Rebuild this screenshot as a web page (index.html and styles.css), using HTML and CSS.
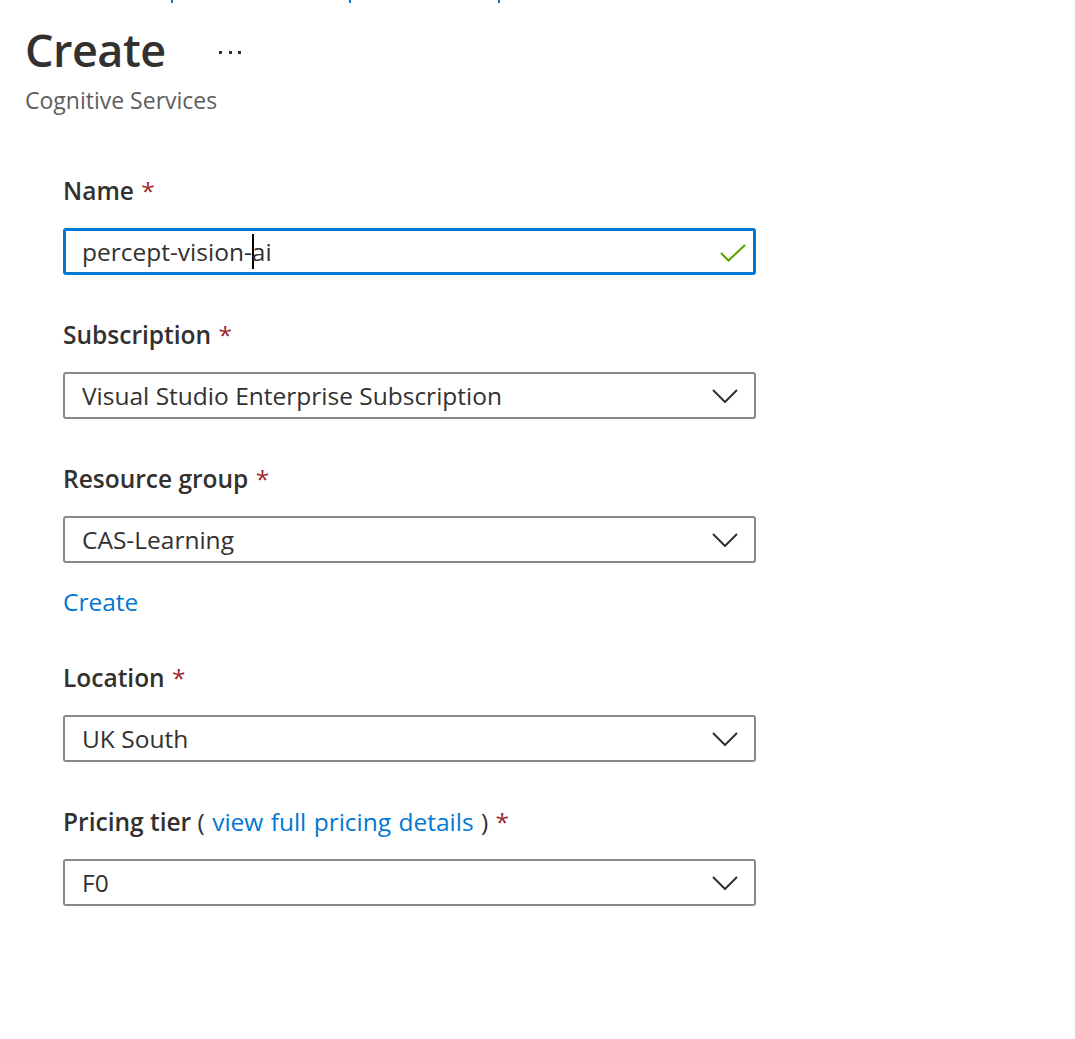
FILE: index.html
```html
<html lang="en">
  <head>
    <meta charset="UTF-8" />
    <meta name="viewport" content="width=device-width, initial-scale=1.0" />
    <title>Create - Cognitive Services</title>
    <link rel="stylesheet" href="styles.css">
  </head>
  <body>
    <div class="top-strip">
      <span class="tick tick-1"></span>
      <span class="tick tick-2"></span>
      <span class="tick tick-3"></span>
    </div>

    <div class="header">
      <div class="title-row">
        <h1 class="title">Create</h1>
        <span class="more">
          <svg width="24" height="4" viewBox="0 0 24 4">
            <rect x="0" y="1" width="3" height="3" fill="#323130" />
            <rect x="10" y="1" width="3" height="3" fill="#323130" />
            <rect x="19" y="1" width="3" height="3" fill="#323130" />
          </svg>
        </span>
      </div>
      <div class="subtitle">Cognitive Services</div>
    </div>

    <div class="form">
      <div class="field">
        <div class="label">Name <span class="req">*</span></div>
        <div class="box box-focus">
          <span class="value">percept-vision-<span class="caret"></span>ai</span>
          <svg class="check" width="26" height="18" viewBox="0 0 26 18">
            <path d="M1 9 L8.5 16.5 L25 1" fill="none" stroke="#57a300" stroke-width="2" />
          </svg>
        </div>
      </div>

      <div class="field">
        <div class="label">Subscription <span class="req">*</span></div>
        <div class="box">
          <span class="value">Visual Studio Enterprise Subscription</span>
          <svg class="chevron" width="26" height="14" viewBox="0 0 26 14">
            <path d="M1 1 L13 13 L25 1" fill="none" stroke="#323130" stroke-width="2" />
          </svg>
        </div>
      </div>

      <div class="field">
        <div class="label">Resource group <span class="req">*</span></div>
        <div class="box">
          <span class="value">CAS-Learning</span>
          <svg class="chevron" width="26" height="14" viewBox="0 0 26 14">
            <path d="M1 1 L13 13 L25 1" fill="none" stroke="#323130" stroke-width="2" />
          </svg>
        </div>
        <a class="link create-link" href="#">Create</a>
      </div>

      <div class="field">
        <div class="label">Location <span class="req">*</span></div>
        <div class="box">
          <span class="value">UK South</span>
          <svg class="chevron" width="26" height="14" viewBox="0 0 26 14">
            <path d="M1 1 L13 13 L25 1" fill="none" stroke="#323130" stroke-width="2" />
          </svg>
        </div>
      </div>

      <div class="field">
        <div class="label">Pricing tier <span class="paren">( <a class="link" href="#">view full pricing details</a> )</span> <span class="req">*</span></div>
        <div class="box">
          <span class="value">F0</span>
          <svg class="chevron" width="26" height="14" viewBox="0 0 26 14">
            <path d="M1 1 L13 13 L25 1" fill="none" stroke="#323130" stroke-width="2" />
          </svg>
        </div>
      </div>
    </div>
  </body>
</html>
```

FILE: styles.css
```css
body {
  margin: 0;
  font-family: "Open Sans", "Noto Sans", sans-serif;
  color: #323130;
  background-color: #fff;
}
.top-strip {
  display: flex;
  height: 3px;
}
.tick {
  width: 2px;
  height: 3px;
  background-color: #0078d4;
}
.tick-1 {
  margin-left: 171px;
}
.tick-2 {
  margin-left: 176px;
}
.tick-3 {
  margin-left: 147px;
}
.header {
  padding: 19px 0 0 25px;
}
.title-row {
  display: flex;
  align-items: center;
}
.title {
  margin: 0;
  font-size: 45px;
  line-height: 56px;
  font-weight: 600;
  letter-spacing: -0.5px;
}
.more {
  display: flex;
  margin-left: 53px;
  padding-top: 4px;
}
.subtitle {
  margin-top: 8px;
  font-size: 23px;
  line-height: 28px;
  color: #605e5c;
}
.form {
  display: flex;
  flex-direction: column;
  gap: 44px;
  width: 693px;
  padding: 61px 0 0 63px;
}
.field {
  display: flex;
  flex-direction: column;
}
.label {
  font-size: 24.5px;
  line-height: 32px;
  font-weight: 600;
  margin-bottom: 21px;
}
.req {
  color: #a4262c;
  font-weight: 400;
  margin-left: 1px;
}
.paren {
  font-weight: 400;
  word-spacing: 1px;
}
.link {
  color: #0078d4;
  text-decoration: none;
  font-weight: 400;
}
.box {
  display: flex;
  align-items: center;
  justify-content: space-between;
  box-sizing: border-box;
  height: 47px;
  padding: 0 16px 0 17px;
  border: 2px solid #8a8886;
  border-radius: 3px;
}
.box-focus {
  border: 3px solid #0078d4;
  padding: 0 7px 0 16px;
}
.value {
  font-size: 24.5px;
  line-height: 32px;
}
.caret {
  display: inline-block;
  width: 2px;
  height: 35px;
  margin-right: -2px;
  vertical-align: -8px;
  background-color: #000;
}
.check {
  margin-top: 2px;
}
.create-link {
  margin-top: 23px;
  font-size: 24.5px;
  line-height: 32px;
  align-self: flex-start;
}
```
